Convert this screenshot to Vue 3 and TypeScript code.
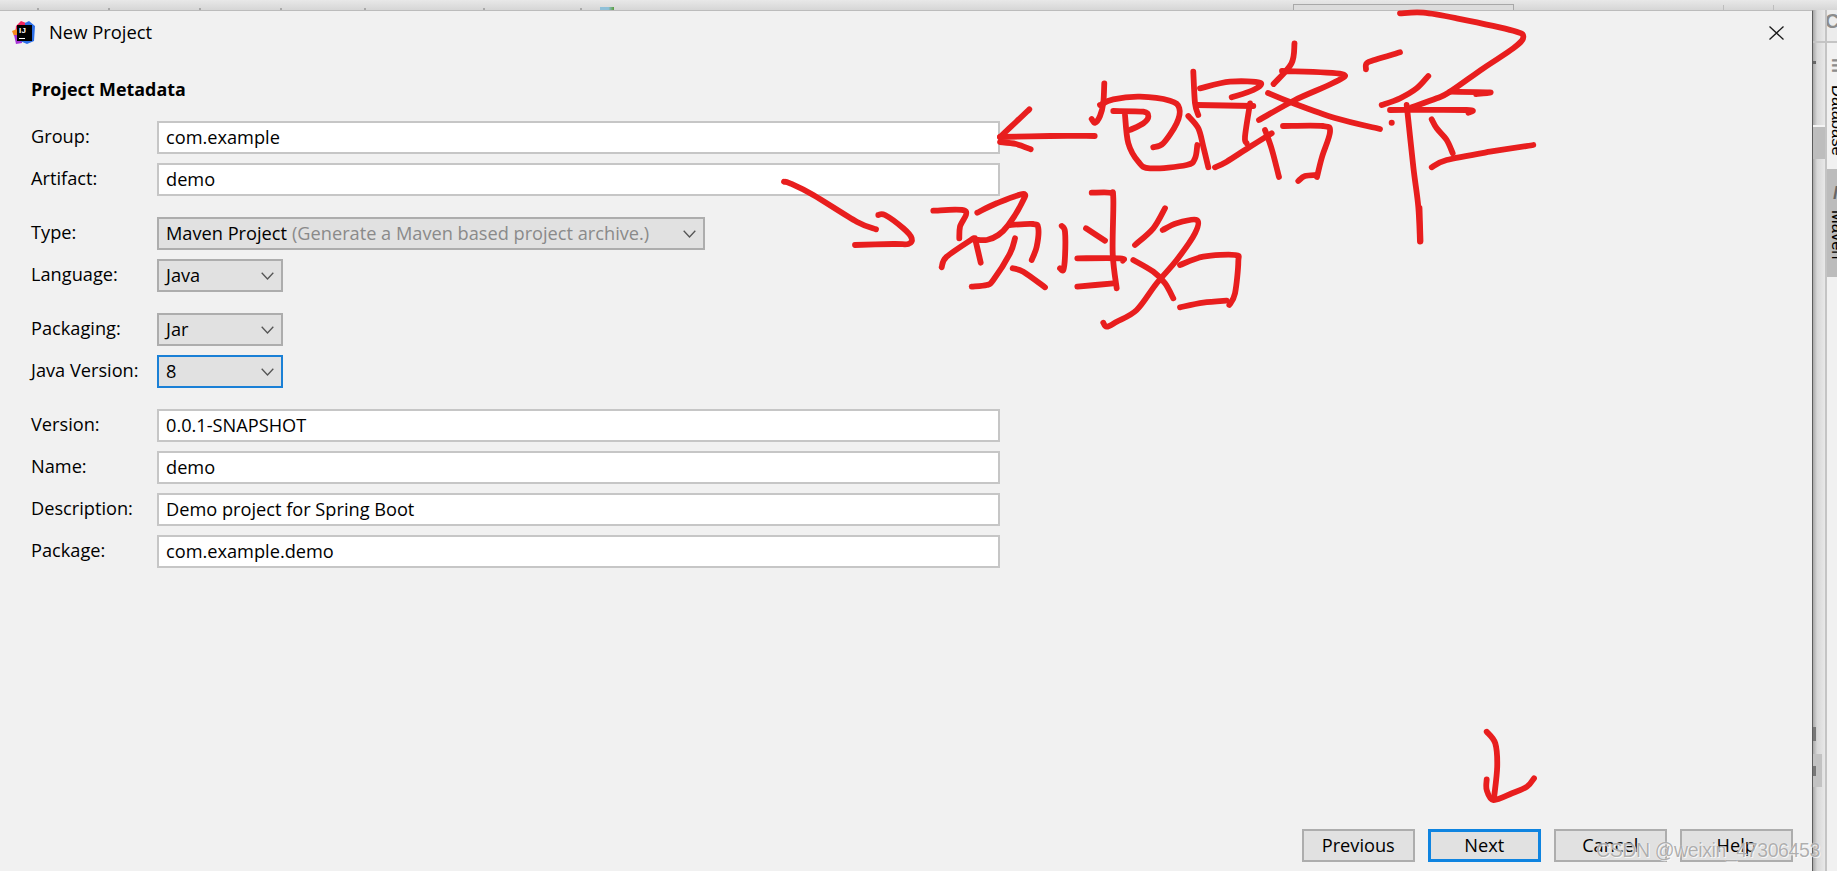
<script setup lang="ts">
type Field = { label: string; value: string; hint?: string; kind: 'text' | 'wide' | 'small' | 'focus' }

const groups: Field[][] = [
  [
    { label: 'Group:', value: 'com.example', kind: 'text' },
    { label: 'Artifact:', value: 'demo', kind: 'text' },
  ],
  [
    { label: 'Type:', value: 'Maven Project', hint: '(Generate a Maven based project archive.)', kind: 'wide' },
    { label: 'Language:', value: 'Java', kind: 'small' },
  ],
  [
    { label: 'Packaging:', value: 'Jar', kind: 'small' },
    { label: 'Java Version:', value: '8', kind: 'focus' },
  ],
  [
    { label: 'Version:', value: '0.0.1-SNAPSHOT', kind: 'text' },
    { label: 'Name:', value: 'demo', kind: 'text' },
    { label: 'Description:', value: 'Demo project for Spring Boot', kind: 'text' },
    { label: 'Package:', value: 'com.example.demo', kind: 'text' },
  ],
]

const buttons = ['Previous', 'Next', 'Cancel', 'Help']

const tickXs = [37, 108, 199, 280, 364, 483, 580]
const ticks = tickXs.map((x, i) => x - (i ? tickXs[i - 1] + 2 : 0))

// freehand red marker annotations, traced as pen strokes
const ink: number[][] = [
  // arrow to Group
  [1094.7, 136, 1050, 136, 1000, 137],
  [1029.3, 109.3, 1016, 122, 1000, 137],
  [1000, 142, 1016, 144, 1030.7, 149.3],
  // first word
  [1104.3, 83.3, 1103.3, 103, 1100, 116, 1095, 122.7, 1091.7, 119],
  [1100, 105, 1113.3, 99.3, 1140, 96.7, 1170, 100.7, 1179.3, 108.3, 1176.7, 123.3, 1163.3, 143.3, 1153.3, 147.3],
  [1113.3, 111, 1143.3, 111.7, 1148.3, 116.7, 1143.3, 123.3, 1130, 130],
  [1125, 115, 1128.3, 143.3, 1138.3, 161.7, 1150, 168.3, 1186.7, 165, 1195, 158.3, 1197.3, 145],
  [1193.3, 71.7, 1195, 103.3, 1198.3, 115],
  [1200, 88.3, 1230, 81.7, 1260, 82.7, 1253.3, 90, 1231.7, 97.3],
  [1196.7, 105, 1253.3, 106],
  [1250, 103.3, 1245, 136.7, 1246.7, 143.3],
  [1188.3, 116, 1198.3, 128.3, 1203.3, 146.7, 1208.3, 167.3],
  [1215, 167.3, 1226.7, 161.7, 1250, 146.7, 1271.7, 133.3],
  [1265, 130, 1272, 150, 1279, 177],
  [1294.5, 43.3, 1291.5, 63.3, 1273.6, 84],
  [1282, 71, 1341.7, 74, 1333, 83, 1295, 100, 1259, 120],
  [1268, 93, 1290, 102, 1335, 118, 1380, 129],
  [1283, 126, 1323, 126, 1330, 132, 1322, 157, 1317, 177],
  [1298.3, 181, 1305, 176, 1316.7, 175],
  [1400, 52.3, 1376.7, 59.3, 1366.7, 63.3, 1366, 69.3],
  [1428.3, 76, 1416.7, 88.3, 1400, 98.3, 1381.7, 105],
  [1390, 110, 1466.7, 110, 1468.3, 112.7],
  [1406.7, 105, 1413.3, 166.7, 1418.3, 206.7, 1420, 241.7],
  [1419.5, 208, 1420.5, 241],
  [1400, 13.3, 1423.3, 12.7, 1456.7, 18.3, 1513.3, 30.7, 1523.3, 37.3, 1513.3, 48.3, 1483.3, 68.3, 1450, 91.7, 1436.7, 98.3, 1411.7, 107.3],
  [1450, 91.7, 1490, 92.3, 1476, 94],
  [1431.7, 119.3, 1436.7, 128.3, 1446.7, 140, 1452.7, 153.3],
  [1431.7, 167.3, 1446.7, 160, 1490, 151.7, 1533.3, 145],
  // arrow to second word
  [784, 181.7, 790, 183.3, 813.3, 195, 856.7, 221.7, 876, 229.3],
  [878.3, 215, 885, 215, 903.3, 228.3, 911.7, 238.3, 908.3, 244, 893.3, 244, 855, 245],
  // second word
  [933.3, 210.7, 965, 210.7, 960, 226.7, 959.3, 238.3],
  [941.7, 267.3, 946.7, 256.7, 973.3, 238.3],
  [975, 238.3, 980.7, 262.7],
  [977.3, 212.7, 996.7, 203.3, 1023.3, 194, 1021.7, 203.3, 1008.3, 225, 998.3, 235, 986.7, 240, 973.3, 239.3],
  [1010, 225, 1033.3, 224, 1038.3, 228.3, 1036.7, 246.7, 1031.7, 260],
  [1015, 238.3, 1010, 253.3, 993.3, 280, 986.7, 285, 971.7, 286.7],
  [1012.7, 268.3, 1023.3, 271.7, 1045, 287.3],
  [1061.7, 226, 1065, 231.7, 1065, 256.7, 1063.3, 270, 1060, 268.3],
  [1091.7, 192.7, 1110, 192.7, 1113.3, 198.3, 1112.7, 253.3, 1116.7, 288.3],
  [1086, 228.3, 1105, 240.7],
  [1077.3, 258.3, 1120, 258.3, 1122.7, 260.7],
  [1077.3, 286.7, 1113.3, 283.3],
  [1165, 208.3, 1153.3, 228.3, 1135, 245],
  [1162.7, 230, 1176.7, 223.3, 1196.7, 220, 1195, 233.3, 1176.7, 260, 1156.7, 283.3, 1136.7, 310, 1116.7, 321.7, 1106.7, 326.7, 1103.3, 322.7],
  [1133.3, 260, 1153.3, 271.7, 1165, 283.3, 1173.3, 298.3],
  [1180, 265, 1203.3, 256.7, 1235, 255, 1238.3, 261.7, 1235, 293.3, 1229.3, 305],
  [1180, 307.3, 1203.3, 302.7, 1226.7, 300.7],
  // arrow to Next
  [1486.7, 731.7, 1495.3, 743.3, 1497.2, 766.7, 1494, 798.3],
  [1486.7, 779.3, 1486.7, 790, 1493.5, 800, 1512, 793.3, 1527, 786.7, 1534, 778.3],
]

function smooth(p: number[]): string {
  const pts: [number, number][] = []
  for (let i = 0; i < p.length; i += 2) pts.push([p[i], p[i + 1]])
  let d = `M${pts[0][0]} ${pts[0][1]}`
  for (let i = 0; i < pts.length - 1; i++) {
    const a = pts[Math.max(0, i - 1)]
    const b = pts[i]
    const c = pts[i + 1]
    const e = pts[Math.min(pts.length - 1, i + 2)]
    const c1x = b[0] + (c[0] - a[0]) / 6
    const c1y = b[1] + (c[1] - a[1]) / 6
    const c2x = c[0] - (e[0] - b[0]) / 6
    const c2y = c[1] - (e[1] - b[1]) / 6
    d += ` C${c1x.toFixed(1)} ${c1y.toFixed(1)} ${c2x.toFixed(1)} ${c2y.toFixed(1)} ${c[0]} ${c[1]}`
  }
  return d
}

const inkPaths = ink.map(smooth)
</script>

<template>
  <div class="screen">
    <div class="backdrop-top">
      <i v-for="(t, i) in ticks" :key="i" class="tick" :style="{ marginLeft: t + 'px' }"></i>
      <i class="peek"></i>
      <i class="tab-edge"></i>
      <i class="tick tick-a"></i>
      <i class="tick tick-b"></i>
    </div>

    <div class="middle">
      <section class="dialog">
        <header class="titlebar">
          <span class="logo">
            <svg class="logo-bg" width="23" height="23" viewBox="0 0 23 23">
              <path d="M4 5 L9 0 L14 2 L14 16 L3 15Z" fill="#f0265f" />
              <path d="M0 10 L5 8 L6 15 L2 15Z" fill="#f78a1f" />
              <path d="M2 14 L10 14 L10 22 L4 23Z" fill="#a733d6" />
              <path d="M13 2 L17 0 L23 5 L22 20 L15 23 L8 20 L13 12Z" fill="#2d6fe8" />
            </svg>
            <span class="logo-box"><b>IJ</b><i></i></span>
          </span>
          <span class="title">New Project</span>
          <svg class="close" width="15" height="14" viewBox="0 0 15 14">
            <path d="M0.5 0.5 L14.5 13.5 M14.5 0.5 L0.5 13.5" stroke="#1a1a1a" stroke-width="1.3" fill="none" />
          </svg>
        </header>

        <main class="body">
          <h2 class="heading">Project Metadata</h2>
          <div v-for="(g, gi) in groups" :key="gi" class="group">
            <div v-for="f in g" :key="f.label" class="row">
              <label class="label">{{ f.label }}</label>
              <div class="field" :class="f.kind">
                <span class="value">{{ f.value }}</span>
                <span v-if="f.hint" class="hint">{{ f.hint }}</span>
                <svg v-if="f.kind !== 'text'" class="chev" width="13" height="8" viewBox="0 0 13 8">
                  <path d="M0.7 0.7 L6.5 7 L12.3 0.7" stroke="#555" stroke-width="1.3" fill="none" />
                </svg>
              </div>
            </div>
          </div>
        </main>

        <footer class="footer">
          <button v-for="b in buttons" :key="b" class="btn" :class="{ primary: b === 'Next' }" type="button">{{ b }}</button>
        </footer>
      </section>

      <aside class="side">
        <div class="gutter">
          <i class="g-line"></i>
          <i class="g-dot"></i>
          <i class="g-white"></i>
          <i class="g-block"></i>
          <i class="g-dark"></i>
          <i class="g-block2"><i></i></i>
        </div>
        <div class="stripe">
          <div class="stripe-top">C</div>
          <div class="stripe-btn"><span class="s-icon">m</span><span class="s-text">Database</span></div>
          <div class="stripe-btn active"><span class="s-icon m">M</span><span class="s-text">Maven</span></div>
        </div>
      </aside>
    </div>

    <svg class="ink" width="1837" height="871" viewBox="0 0 1837 871" aria-hidden="true">
      <path v-for="(d, i) in inkPaths" :key="i" :d="d" />
      <circle cx="1391.7" cy="122.7" r="3" />
    </svg>
    <div class="watermark">CSDN @weixin_47306453</div>
  </div>
</template>

<style>
html, body { margin: 0; background: #f1f1f1; }
</style>

<style scoped>
.screen {
  position: relative;
  width: 1837px;
  height: 871px;
  overflow: hidden;
  display: flex;
  flex-direction: column;
  background: #f1f1f1;
  font-family: "Open Sans", "Noto Sans", sans-serif;
  color: #000;
}
.backdrop-top {
  height: 10px;
  flex: none;
  display: flex;
  align-items: flex-end;
  background: linear-gradient(#e8e8e8, #d6d6d6);
}
.tick { display: block; width: 2px; height: 2px; background: #a8a8a8; flex: none; }
.peek {
  display: block; width: 14px; height: 3px; margin-left: 18px; flex: none;
  background: linear-gradient(90deg, #8fc0d8 60%, #5a9e3a);
}
.tab-edge {
  display: block; flex: none; width: 221px; height: 6px; margin-left: 679px;
  box-sizing: border-box; border: 1px solid #a8a8a8; border-bottom: 0; background: #dcdcdc;
}
.tick-a { margin-left: 209px; height: 5px; background: #bdbdbd; width: 1px; }
.tick-b { margin-left: 49px; height: 5px; background: #bdbdbd; width: 1px; }

.middle { flex: 1; display: flex; min-height: 0; }

.dialog {
  width: 1813px;
  flex: none;
  box-sizing: border-box;
  display: flex;
  flex-direction: column;
  background: #f1f1f1;
  border-top: 1px solid #bcbcbc;
  border-right: 1px solid #5c5c5c;
}
.titlebar {
  height: 43px;
  flex: none;
  display: flex;
  align-items: center;
  padding-left: 12px;
  padding-right: 28px;
}
.logo { position: relative; width: 23px; height: 23px; flex: none; }
.logo-bg { display: block; }
.logo-box {
  position: absolute; left: 5px; top: 4px; width: 15px; height: 16px; background: #000;
  color: #fff; overflow: hidden;
}
.logo-box b {
  display: block; font: 700 8px/9px "Liberation Sans", sans-serif; padding: 1px 0 0 2px; letter-spacing: 0.2px;
}
.logo-box i { position: absolute; left: 2px; bottom: 2px; width: 6px; height: 1px; background: #fff; }
.title { margin-left: 14px; margin-bottom: 2px; font-size: 18.4px; line-height: 24px; flex: 1; }
.close { flex: none; display: block; }

.body { flex: 1; padding: 23px 0 0 31px; min-height: 0; }
.heading { margin: 0 0 20px; font-size: 17.9px; line-height: 24px; font-weight: 700; }
.group { display: flex; flex-direction: column; gap: 10px; margin-bottom: 22px; }
.row { display: flex; align-items: flex-start; height: 32px; }
.label { width: 126px; flex: none; font-size: 18.2px; line-height: 31px; }
.field {
  position: relative;
  box-sizing: border-box;
  height: 33px;
  display: flex;
  align-items: center;
  padding-left: 7px;
  padding-bottom: 1px;
  font-size: 18.2px;
  white-space: nowrap;
  border: 2px solid #c6c6c6;
  background: #fff;
  width: 843px;
}
.field.wide, .field.small, .field.focus { background: #e1e1e1; border-color: #adadad; }
.field.wide { width: 548px; }
.field.small, .field.focus { width: 126px; }
.field.focus { border-color: #1a80d6; }
.hint { color: #8a8a8a; margin-left: 5px; }
.chev { position: absolute; right: 7px; top: 11px; }

.footer {
  flex: none;
  display: flex;
  justify-content: flex-end;
  gap: 12.5px;
  padding: 0 19px 9px 0;
}
.btn {
  box-sizing: border-box;
  width: 113.5px;
  height: 33px;
  padding: 0 0 2px;
  border: 2px solid #adadad;
  background: #e1e1e1;
  color: #000;
  font: 18.2px "Open Sans", "Noto Sans", sans-serif;
}
.btn.primary { border: 3px solid #0f84e0; }

.side { flex: 1; display: flex; min-width: 0; }
.gutter {
  width: 12px;
  flex: none;
  display: flex;
  flex-direction: column;
  background: linear-gradient(90deg, #a8a8a8, #d8d8d8 35%, #e8e8e8);
}
.gutter i { display: block; flex: none; }
.g-line { height: 2px; margin-top: 31px; background: #c4c4c4; }
.g-dot { width: 3px; height: 3px; margin-top: 18px; background: #666; }
.g-white { height: 2px; margin-top: 61px; background: #f4f4f4; }
.g-block { height: 32px; background: #bdbdbd; }
.g-dark { width: 3px; height: 14px; margin-top: 568px; background: #777; }
.g-block2 { width: 9px; height: 33px; margin-top: 13px; background: #c2c2c2; }
.g-block2 i { width: 3px; height: 10px; margin-top: 12px; background: #777; }
.stripe {
  flex: 1;
  min-width: 0;
  box-sizing: border-box;
  border-left: 2px solid #c4c4c4;
  background: #f1f1f1;
  overflow: hidden;
}
.stripe-top {
  height: 31px; margin-left: -2px; background: #ececec; color: #8c8c8c;
  font: 700 20px/22px "Liberation Sans", sans-serif; border-bottom: 2px solid #c4c4c4;
  position: relative;
}
.stripe-btn {
  display: flex; flex-direction: column; align-items: flex-start; box-sizing: border-box; overflow: hidden;
  height: 126px; padding: 15px 0 0 4px;
  font: 16.5px "Liberation Sans", sans-serif;
}
.stripe-btn.active { height: 108px; background: #bcbcbc; padding-top: 18px; }
.s-icon { color: #8c8c8c; font-weight: 700; writing-mode: vertical-lr; line-height: 14px; height: 17px; }
.s-icon.m { writing-mode: horizontal-tb; font-size: 18px; line-height: 13px; height: 13px; font-style: italic; color: #666; padding-left: 2px; }
.s-text { writing-mode: vertical-lr; line-height: 14px; margin-top: 10px; }

.ink { position: absolute; left: 0; top: 0; pointer-events: none; }
.ink path { fill: none; stroke: #e81e1e; stroke-width: 5.8; stroke-linecap: round; stroke-linejoin: round; }
.ink circle { fill: #e81e1e; }

.watermark {
  position: absolute;
  left: 1596px;
  top: 838px;
  font: 19.5px/24px "Liberation Sans", sans-serif;
  letter-spacing: -0.4px;
  color: rgba(140, 140, 140, 0.7);
  text-shadow: 0 0 1px #fff, 1px 1px 0 rgba(255, 255, 255, 0.7);
  white-space: nowrap;
}
</style>
